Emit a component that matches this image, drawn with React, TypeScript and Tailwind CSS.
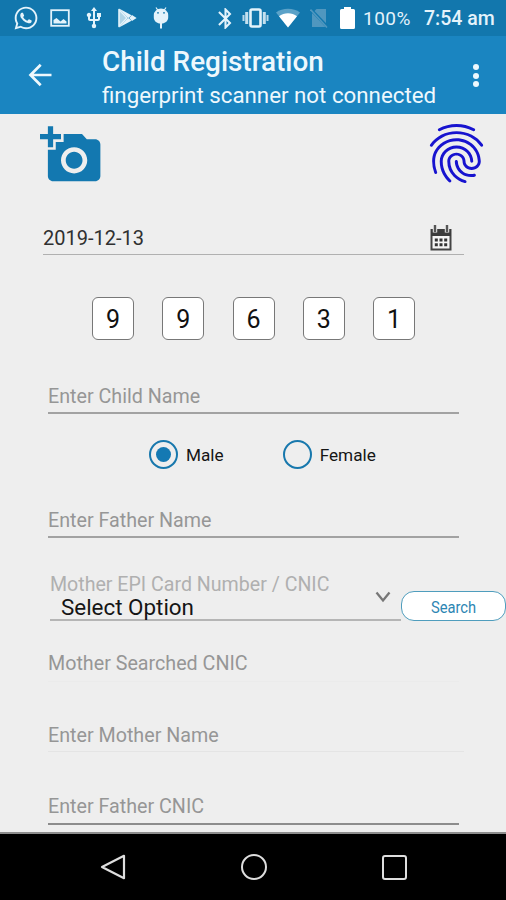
import React, { useState } from "react";
import { FaWhatsapp } from "react-icons/fa";
import { MdAddAPhoto, MdBluetooth, MdFingerprint, MdUsb } from "react-icons/md";

function StatusBar() {
  return (
    <div className="flex h-9 items-center bg-[#1277ad] pl-[13px] text-[#e4f3fb]">
      <FaWhatsapp className="h-[26px] w-[26px] shrink-0" />
      <svg viewBox="0 0 20 18" className="ml-[11px] h-[18px] w-5 shrink-0">
        <rect x="1.2" y="1.2" width="17.6" height="15.6" fill="none" stroke="currentColor" strokeWidth="1.8" />
        <path d="M3.5 14.5V11l3-2 4 3.5 3-2.5 3 2.5v2z" fill="currentColor" />
      </svg>
      <MdUsb className="ml-[12px] h-6 w-6 shrink-0" />
      {/* Play store */}
      <svg viewBox="0 0 19 20" className="ml-[12px] h-5 w-[19px] shrink-0">
        <path d="M1 1.500l8 8.500-8 8.500z" fill="currentColor" fillOpacity=".75" stroke="currentColor" strokeWidth="1.600" strokeLinejoin="round" />
        <path d="M1 .5l12.500 6.800-3.200 3zM1 19.500l12.500-6.800-3.200-3z" fill="currentColor" />
        <path d="M14 7l4.600 3-4.600 3-2.800-3z" fill="currentColor" />
      </svg>
      {/* Debugging head */}
      <svg viewBox="0 0 16 22" className="ml-4 h-[22px] w-4 shrink-0">
        <path d="M3 .5l2 3M13 .5l-2 3" stroke="currentColor" strokeWidth="1.200" />
        <path d="M.8 8a7.200 6.500 0 0 1 14.400 0v2.500c0 3.500-3 5.500-5.500 6H6.300c-2.500-.5-5.500-2.500-5.500-6z" fill="currentColor" />
        <path d="M8 15v6.500" stroke="currentColor" strokeWidth="2" />
        <circle cx="5" cy="5.800" r=".9" fill="#1277ad" />
        <circle cx="11" cy="5.800" r=".9" fill="#1277ad" />
      </svg>
      <MdBluetooth className="ml-[44px] h-[25px] w-[25px] shrink-0" />
      {/* Vibrate */}
      <svg viewBox="0 0 27 20" className="ml-[4px] h-5 w-[27px] shrink-0">
        <rect x="8.500" y="1.500" width="10" height="17" rx="1.500" fill="none" stroke="currentColor" strokeWidth="2.600" />
        <path d="M4.700 4v12M22.300 4v12" stroke="currentColor" strokeWidth="3" opacity=".85" />
        <path d="M1.500 7v6M25.500 7v6" stroke="currentColor" strokeWidth="2" opacity=".8" />
      </svg>
      {/* Wifi */}
      <svg viewBox="0 0 24 20" className="ml-[7px] h-5 w-6 shrink-0">
        <path d="M12 19.500L0 4.500C6.500-.5 17.500-.5 24 4.500z" fill="currentColor" opacity=".35" />
        <path d="M12 19.500L3 8.200C8 4.200 16 4.200 21 8.200z" fill="#fff" />
      </svg>
      {/* No sim */}
      <svg viewBox="0 0 18 20" className="ml-[10px] h-5 w-[18px] shrink-0 text-[#5097bf]">
        <path d="M6.500 1H16v18H2V5.500z" fill="currentColor" />
        <path d="M0 .5l17.500 18.500" stroke="#1277ad" strokeWidth="3" />
        <path d="M.5 1.500l16.500 18" stroke="currentColor" strokeWidth="1.600" />
      </svg>
      {/* Battery */}
      <svg viewBox="0 0 15 22" className="ml-[12px] h-[22px] w-[15px] shrink-0 text-white">
        <path d="M4 0h7v2h2.500q1.500 0 1.500 1.500v17q0 1.500-1.500 1.500h-12Q0 22 0 20.500v-17Q0 2 1.500 2H4z" fill="currentColor" />
      </svg>
      <span className="ml-[8px] w-[50px] shrink-0 whitespace-nowrap pt-[2px] text-[19px] tracking-[0.500px]">
        100%
      </span>
      <span className="ml-[11px] whitespace-nowrap pt-[2px] text-[19.500px] font-medium">
        7:54 am
      </span>
    </div>
  );
}

function AppBar() {
  return (
    <header className="flex h-[78px] bg-[#1a85c1] text-[#eef8fd]">
      <button className="ml-7 mt-[26px] h-[26px] w-[26px]" aria-label="Back">
        <svg viewBox="0 0 26 26" fill="none" stroke="currentColor" strokeWidth="2.700">
          <path d="M23.500 13H3M12.700 2.800L2.500 13l10.200 10.200" />
        </svg>
      </button>
      <div className="ml-12 flex-1 whitespace-nowrap">
        <h1 className="mt-[9px] text-[27.900px] font-medium leading-[34px]">
          Child Registration
        </h1>
        <p className="text-[22.300px] leading-[32px]">
          fingerprint scanner not connected
        </p>
      </div>
      <button
        className="mr-[27px] mt-[28px] flex flex-col items-center gap-[2.500px] self-start"
        aria-label="More"
      >
        <span className="h-[6px] w-[6px] rounded-full bg-current" />
        <span className="h-[6px] w-[6px] rounded-full bg-current" />
        <span className="h-[6px] w-[6px] rounded-full bg-current" />
      </button>
    </header>
  );
}

function CalendarIcon() {
  return (
    <svg viewBox="0 0 22 26" className="h-[26px] w-[22px]">
      <rect x="1.500" y="5" width="19" height="19.500" fill="#f5f5f5" stroke="#444" strokeWidth="2" />
      <path d="M1 4h20v7H1z" fill="#3c3c3c" />
      <path d="M5 0v7.500M17 0v7.500" stroke="#eee" strokeWidth="4.400" />
      <path d="M5 0v7M17 0v7" stroke="#555" strokeWidth="2.400" />
      <path d="M4.800 15h3M9.500 15h3M14.200 15h3M4.800 19.800h3M9.500 19.800h3M14.200 19.800h3" stroke="#333" strokeWidth="3" />
    </svg>
  );
}

interface FieldProps {
  label: string;
  className: string;
}

function Field({ label, className }: FieldProps) {
  return (
    <div className={`ml-12 flex shrink-0 items-end whitespace-nowrap text-[19.700px] leading-6 text-[#969696] ${className}`}>
      {label}
    </div>
  );
}

interface RadioProps {
  label: string;
  checked: boolean;
  onChange: () => void;
}

function Radio({ label, checked, onChange }: RadioProps) {
  return (
    <button className="flex items-center gap-2" onClick={onChange}>
      <span className="flex h-[29px] w-[29px] items-center justify-center rounded-full border-[2.500px] border-[#1878ad]">
        {checked && <span className="h-[15px] w-[15px] rounded-full bg-[#1479b3]" />}
      </span>
      <span className="pt-px text-[17.200px] leading-[26px] text-[#151515]">{label}</span>
    </button>
  );
}

function NavBar() {
  return (
    <nav className="flex h-[66px] items-center bg-black pl-[100px] text-[#dedede]">
      <svg viewBox="0 0 26 26" className="h-[26px] w-[26px]" fill="none" stroke="currentColor" strokeWidth="2.200" strokeLinejoin="round">
        <path d="M24 1.800v22.400L2 13z" />
      </svg>
      <span className="ml-[115px] h-[26px] w-[26px] rounded-full border-2 border-current" />
      <span className="ml-[115px] h-[25px] w-[25px] rounded-[3px] border-[2.500px] border-current" />
    </nav>
  );
}

export default function App() {
  const [gender, setGender] = useState("male");
  const epiDigits = ["9", "9", "6", "3", "1"];

  return (
    <div className="flex h-[900px] w-[506px] flex-col overflow-hidden bg-[#eeeeee] font-[Roboto,sans-serif]">
      <StatusBar />
      <AppBar />

      <main className="flex h-[720px] flex-col border-b-2 border-[#8d8d8d]">
        <div className="flex h-[80px] items-start justify-between pl-[40px] pr-[14px]">
          <MdAddAPhoto className="mt-[9px] h-[64px] w-[63px] text-[#1378b0]" />
          <MdFingerprint className="mt-[4px] h-[71px] w-[71px] text-[#1713cf]" />
        </div>

        {/* Vaccination date */}
        <div className="ml-[43px] mt-[22px] flex h-[39px] w-[421px] items-center justify-between border-b-[1.500px] border-[#b0b0b0] pr-3 pt-[5px]">
          <span className="text-[20px] text-[#303030]">2019-12-13</span>
          <CalendarIcon />
        </div>

        {/* EPI number */}
        <div className="ml-[92px] mt-[42px] flex gap-[28.250px]">
          {epiDigits.map((digit, i) => (
            <span
              key={i}
              className="flex h-[43px] w-[42px] items-center justify-center rounded-md border border-[#777] bg-white pt-[2px] text-[25px] text-[#111]"
            >
              {digit}
            </span>
          ))}
        </div>

        <Field label="Enter Child Name" className="h-[74px] w-[411px] border-b-2 border-[#a2a2a2] pb-[3px]" />

        <div className="ml-[149px] mt-[26px] flex gap-[59px]">
          <Radio label="Male" checked={gender === "male"} onChange={() => setGender("male")} />
          <Radio label="Female" checked={gender === "female"} onChange={() => setGender("female")} />
        </div>

        <Field label="Enter Father Name" className="h-[69px] w-[411px] border-b-2 border-[#a2a2a2] pb-[3px]" />

        <div className="mt-[33px] flex h-[50px] items-end">
          <div className="ml-[50px] flex h-[50px] w-[351px] justify-between border-b-2 border-[#b5b5b5]">
            <div className="whitespace-nowrap">
              <div className="pt-[2px] text-[19.600px] leading-6 text-[#b0b0b0]">
                Mother EPI Card Number / CNIC
              </div>
              <div className="ml-[11px] text-[22.400px] leading-[20px] text-[#151515]">
                Select Option
              </div>
            </div>
            <svg viewBox="0 0 16 12" className="mr-[10px] mt-[20px] h-3 w-4" fill="none" stroke="#777" strokeWidth="2.300">
              <path d="M1.500 1.500L8 9.500l6.500-8" />
            </svg>
          </div>
          <button className="h-[30px] w-[105px] rounded-[13px] border-[1.500px] border-[#4f9dbd] bg-white pt-[3px] text-[16px] text-[#2d86b3]">
            <span className="inline-block scale-x-[0.920]">Search</span>
          </button>
        </div>

        <Field label="Mother Searched CNIC" className="h-[61px] w-[411px] border-b border-[#ebebeb] pb-[5px]" />
        <Field label="Enter Mother Name" className="h-[70px] w-[416px] border-b border-[#e4e4e4] pb-[3px]" />
        <Field label="Enter Father CNIC" className="h-[73px] w-[411px] border-b-2 border-[#8c8c8c] pb-1" />
      </main>

      <NavBar />
    </div>
  );
}
